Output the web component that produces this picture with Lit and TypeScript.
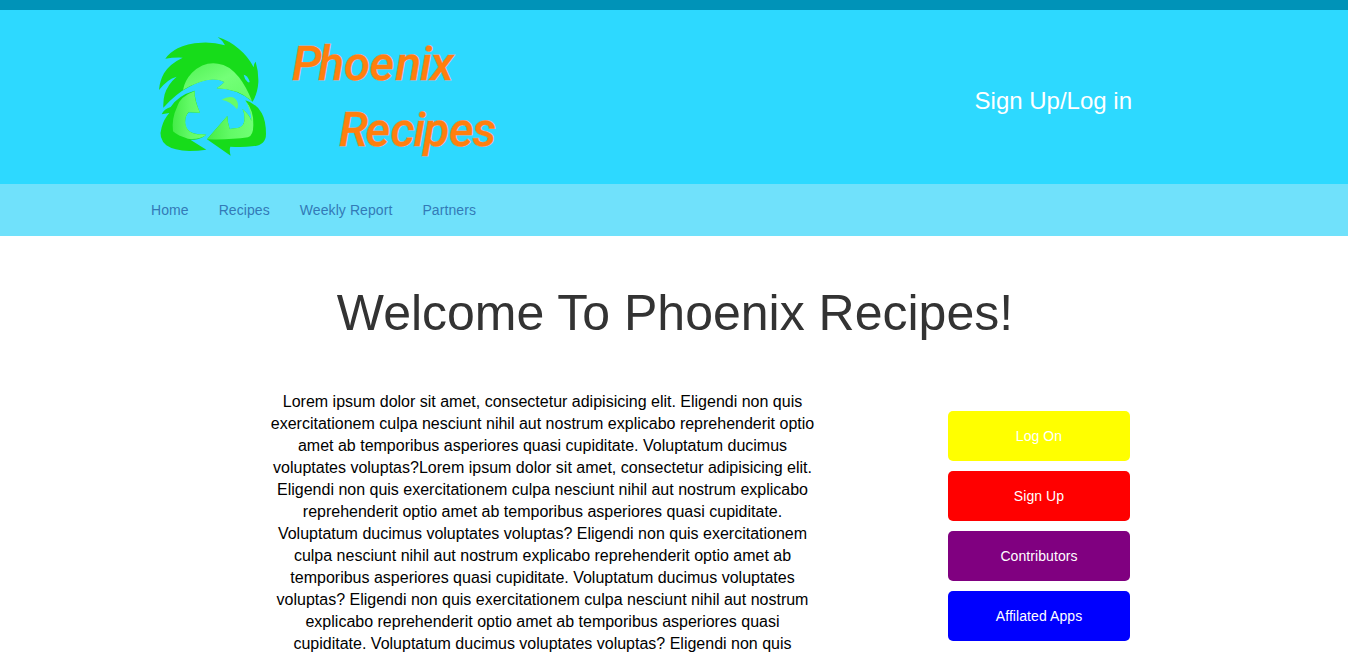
import { LitElement, html, css } from "lit";
import { customElement } from "lit/decorators.js";

const NAV = ["Home", "Recipes", "Weekly Report", "Partners"];

const ACTIONS = [
  { label: "Log On", tone: "yellow" },
  { label: "Sign Up", tone: "red" },
  { label: "Contributors", tone: "purple" },
  { label: "Affilated Apps", tone: "blue" },
];

const COPY = [
  "Lorem ipsum dolor sit amet, consectetur adipisicing elit. Eligendi non quis",
  "exercitationem culpa nesciunt nihil aut nostrum explicabo reprehenderit optio",
  "amet ab temporibus asperiores quasi cupiditate. Voluptatum ducimus",
  "voluptates voluptas?Lorem ipsum dolor sit amet, consectetur adipisicing elit.",
  "Eligendi non quis exercitationem culpa nesciunt nihil aut nostrum explicabo",
  "reprehenderit optio amet ab temporibus asperiores quasi cupiditate.",
  "Voluptatum ducimus voluptates voluptas? Eligendi non quis exercitationem",
  "culpa nesciunt nihil aut nostrum explicabo reprehenderit optio amet ab",
  "temporibus asperiores quasi cupiditate. Voluptatum ducimus voluptates",
  "voluptas? Eligendi non quis exercitationem culpa nesciunt nihil aut nostrum",
  "explicabo reprehenderit optio amet ab temporibus asperiores quasi",
  "cupiditate. Voluptatum ducimus voluptates voluptas? Eligendi non quis",
];

@customElement("phoenix-logo")
export class PhoenixLogo extends LitElement {
  static styles = css`
    :host { display: block; width: 360px; height: 140px; }
    svg { display: block; }
    .word {
      font-family: Roboto, "Open Sans", sans-serif;
      font-style: italic;
      font-weight: 500;
      font-size: 47.5px;
      fill: #ff7f0e;
      stroke: #e0a5a0;
      stroke-width: 0.8px;
      paint-order: stroke;
    }
  `;

  render() {
    return html`
      <svg width="360" height="140" viewBox="0 0 360 140" role="img" aria-label="Phoenix Recipes">
        <defs>
          <linearGradient id="belly" x1="0" y1="0" x2="1" y2="1">
            <stop offset="0" stop-color="#4ff252" />
            <stop offset="0.5" stop-color="#74ff78" />
            <stop offset="1" stop-color="#62fb66" />
          </linearGradient>
          <linearGradient id="wing" x1="0" y1="0" x2="1" y2="0">
            <stop offset="0" stop-color="#45ec48" />
            <stop offset="0.5" stop-color="#62fa66" />
            <stop offset="1" stop-color="#70ff74" />
          </linearGradient>
        </defs>
        <g transform="scale(0.33333)">
          <path fill="#17dc1a" d="M40 248 Q78 205 118 185 Q148 168 174 164 Q204 160 223 171 L213 181 L200 190 Q258 190 308 230 Q323 205 325 172 Q326 140 317 110 Q312 114 311 127 Q294 94 267 72 Q239 47 203 36 Q217 45 225 61 Q190 51 155 53 Q110 55 83 70 Q60 82 46 101 Q70 97 98 98 Q58 117 42 145 Q29 168 27 195 Q51 163 80 155 Q53 178 44 208 Q39 226 40 248Z" />
          <path fill="url(#belly)" d="M99 195 Q104 166 126 143 Q162 109 204 116 Q237 119 267 157 Q288 184 306 228 Q262 191 200 190 L213 181 L223 171 Q190 156 148 172 Q120 182 99 195Z" />
          <path fill="#2fd9ff" d="M281 149 Q293 151 299 170 Q298 174 293 171 Q283 162 281 149Z" />
          <path fill="#17dc1a" d="M35 268 Q42 252 62 246 Q84 211 134 197 Q133 224 150 263 L116 262 Q105 272 105 294 Q108 326 152 328 L169 329 Q151 343 133 344 L121 344 L169 374 Q144 378 118 378 Q72 377 49 361 Q24 340 35 307 Q41 283 58 264Z" />
          <path fill="url(#wing)" d="M134 198 Q132 224 150 263 L116 261 Q104 274 106 293 Q109 328 154 328 L169 329 Q145 346 114 341 Q84 333 69 319 Q64 282 82 244 Q90 215 134 198Z" />
          <path fill="#17dc1a" d="M171 343 L232 273 Q232 292 239 312 L267 308 Q286 301 283 276 Q284 263 277 252 Q299 269 304 288 Q305 254 286 226 Q319 235 335 264 Q348 287 348 327 Q348 362 306 364 Q279 367 241 365 Q237 375 242 392 Z" />
          <path fill="url(#wing)" d="M171 343 L232 273 Q232 292 239 312 L267 308 Q286 301 283 276 Q284 263 277 252 Q299 269 304 288 Q304 257 286 226 Q312 258 310 300 Q310 332 294 337 Q240 345 171 343Z" />
          <path fill="#66fb69" d="M215 224 Q231 214 248 217 Q261 221 264 238 Q265 246 261 253 Q243 229 215 224Z" />
        </g>
        <text class="word" x="142 168.5 194 219.5 245.5 270 280.5" y="54.5">Phoenix</text>
        <text class="word" x="189 215.5 240.5 263.5 273.5 299 322.5" y="120.5">Recipes</text>
      </svg>
    `;
  }
}

@customElement("app-root")
export class AppRoot extends LitElement {
  static styles = css`
    :host {
      display: block;
      height: 656px;
      overflow: hidden;
      background: #fff;
      font: 14px/20px "Liberation Sans", Arial, sans-serif;
      color: #333;
    }
    .header {
      box-sizing: border-box;
      height: 184px;
      border-top: 10px solid #0093b8;
      background: #2dd9ff;
      display: flex;
      justify-content: space-between;
      align-items: flex-start;
      padding: 15px 216px 0 150px;
    }
    .account { margin-top: 59px; font-size: 24px; line-height: 34px; color: #fff; }
    .nav {
      box-sizing: border-box;
      height: 52px;
      background: #70e1fb;
      display: flex;
      align-items: center;
      gap: 30px;
      padding-left: 151px;
      letter-spacing: 0.08px;
    }
    .link { color: #337ab7; text-decoration: none; }
    .title {
      margin: 50px 0 0;
      padding-left: 2px;
      text-align: center;
      font-size: 50px;
      line-height: 55px;
      font-weight: 400;
    }
    .main { display: flex; justify-content: space-between; padding: 50px 218px 0 262px; }
    .copy {
      margin: 0;
      width: 561px;
      text-align: center;
      font-size: 16px;
      line-height: 22px;
      color: #000;
      white-space: nowrap;
    }
    .actions { display: flex; flex-direction: column; gap: 10px; width: 182px; padding-top: 20px; }
    .button {
      height: 50px;
      border: 0;
      border-radius: 5px;
      padding: 0;
      font: inherit;
      letter-spacing: 0.08px;
      color: #fff;
    }
    .yellow { background: #ff0; }
    .red { background: #f00; }
    .purple { background: #800080; }
    .blue { background: #00f; }
  `;

  render() {
    return html`
      <header class="header">
        <phoenix-logo></phoenix-logo>
        <span class="account">Sign Up/Log in</span>
      </header>
      <nav class="nav">${NAV.map((n) => html`<a class="link" href="#">${n}</a>`)}</nav>
      <h1 class="title">Welcome To Phoenix Recipes!</h1>
      <main class="main">
        <p class="copy">${COPY.map((line) => html`${line}<br />`)}</p>
        <div class="actions">
          ${ACTIONS.map((a) => html`<button class="button ${a.tone}">${a.label}</button>`)}
        </div>
      </main>
    `;
  }
}
